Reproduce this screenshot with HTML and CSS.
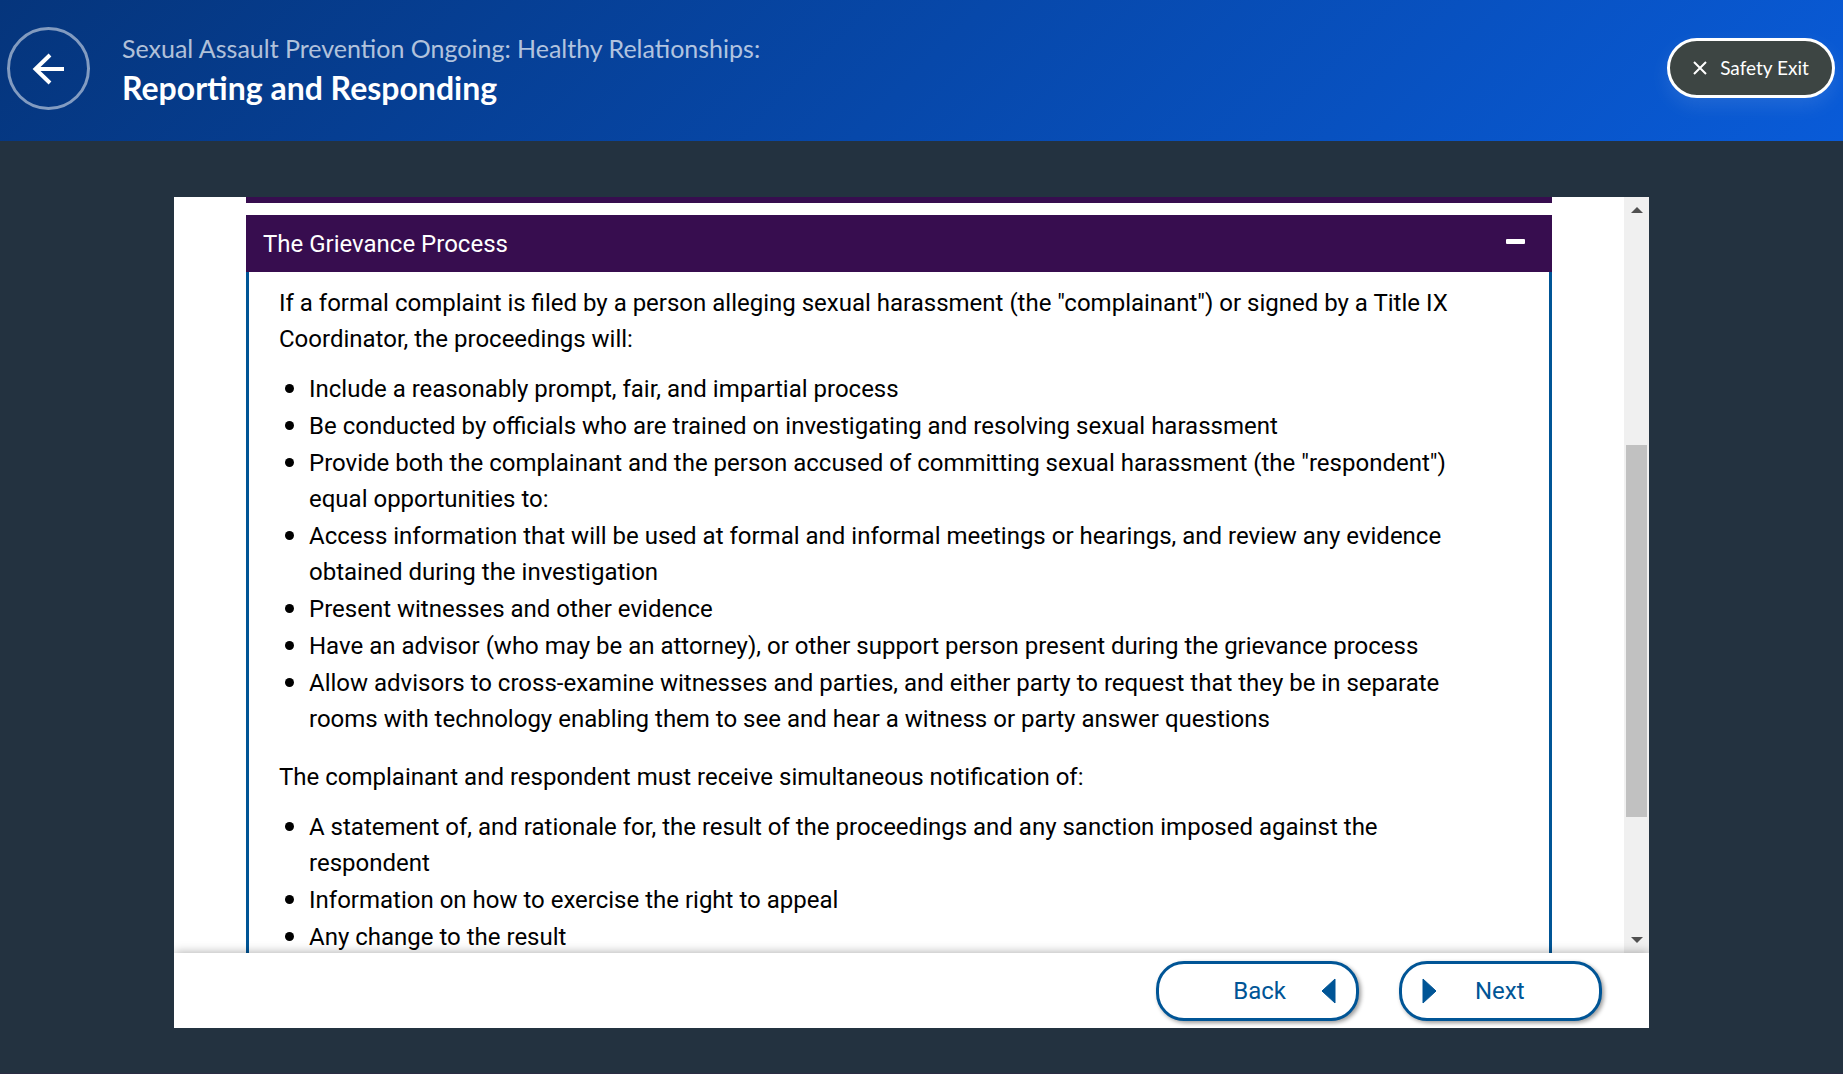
FILE: index.html
```html
<!DOCTYPE html>
<html lang="en">
<head>
<meta charset="utf-8">
<title>Reporting and Responding</title>
<link rel="stylesheet" href="styles.css">
</head>
<body>
<header class="topbar">
  <button class="back-circle" type="button" aria-label="Back to course">
    <svg class="arrow" viewBox="0 0 34 32" aria-hidden="true"><path d="M32 16H3M18 2L3.500 16L18 30"/></svg>
  </button>
  <div class="titles">
    <p class="course">Sexual Assault Prevention Ongoing: Healthy Relationships:</p>
    <h1 class="module">Reporting and Responding</h1>
  </div>
  <button class="safety-exit" type="button">
    <svg class="cross" viewBox="0 0 14 14" aria-hidden="true"><path d="M1 1L13 13M13 1L1 13"/></svg>
    Safety Exit
  </button>
</header>
<main class="main">
  <div class="stage">
    <div class="viewport">
      <div class="content">
        <div class="previous-panel"></div>
        <section class="panel">
          <h2 class="panel-title">
            <button class="panel-toggle" type="button" aria-expanded="true">The Grievance Process<span class="minus"></span></button>
          </h2>
          <div class="panel-body">
            <p class="text">If a formal complaint is filed by a person alleging sexual harassment (the "complainant") or signed by a Title IX Coordinator, the proceedings will:</p>
            <ul class="list">
              <li>Include a reasonably prompt, fair, and impartial process</li>
              <li>Be conducted by officials who are trained on investigating and resolving sexual harassment</li>
              <li>Provide both the complainant and the person accused of committing sexual harassment (the "respondent") equal opportunities to:</li>
              <li>Access information that will be used at formal and informal meetings or hearings, and review any evidence obtained during the investigation</li>
              <li>Present witnesses and other evidence</li>
              <li>Have an advisor (who may be an attorney), or other support person present during the grievance process</li>
              <li>Allow advisors to cross-examine witnesses and parties, and either party to request that they be in separate rooms with technology enabling them to see and hear a witness or party answer questions</li>
            </ul>
            <p class="text">The complainant and respondent must receive simultaneous notification of:</p>
            <ul class="list">
              <li>A statement of, and rationale for, the result of the proceedings and any sanction imposed against the respondent</li>
              <li>Information on how to exercise the right to appeal</li>
              <li>Any change to the result</li>
            </ul>
          </div>
        </section>
      </div>
      <div class="scrollbar" aria-hidden="true">
        <svg class="scroll-arrow" viewBox="0 0 12 6"><path d="M0 6L6 0L12 6Z"/></svg>
        <div class="track"><div class="thumb"></div></div>
        <svg class="scroll-arrow" viewBox="0 0 12 6"><path d="M0 0L6 6L12 0Z"/></svg>
      </div>
    </div>
    <nav class="controls">
      <button class="nav-button back" type="button">Back<svg class="triangle" viewBox="0 0 15 26" aria-hidden="true"><path d="M14 1V25L1 13Z"/></svg></button>
      <button class="nav-button next" type="button"><svg class="triangle" viewBox="0 0 15 26" aria-hidden="true"><path d="M1 1V25L14 13Z"/></svg>Next</button>
    </nav>
  </div>
</main>
</body>
</html>
```
FILE: styles.css
```css
* { box-sizing: border-box; }

body {
  margin: 0;
  height: 100vh;
  display: flex;
  flex-direction: column;
  background: #233240;
  font-family: Roboto, "Liberation Sans", sans-serif;
}

button { font: inherit; cursor: pointer; }

.topbar {
  display: flex;
  align-items: center;
  gap: 32px;
  height: 141px;
  padding: 0 8px 6px 7px;
  background: linear-gradient(135deg, #05357c, #095bd8);
  color: #fff;
  font-family: Lato, "Open Sans", sans-serif;
}

.back-circle {
  display: flex;
  align-items: center;
  justify-content: center;
  width: 83px;
  height: 83px;
  margin-top: 2px;
  padding: 0;
  border: 3px solid rgba(255, 255, 255, 0.5);
  border-radius: 50%;
  background: none;
}

.arrow { width: 34px; height: 32px; }
.arrow path { fill: none; stroke: #fff; stroke-width: 4; }

.titles { flex: 1; }

.course {
  margin: 0;
  font-size: 25px;
  line-height: 40px;
  color: rgba(255, 255, 255, 0.7);
}

.module {
  margin: 0;
  font-size: 32px;
  line-height: 40px;
  font-weight: 700;
}

.safety-exit {
  display: flex;
  align-items: center;
  justify-content: center;
  gap: 13px;
  width: 168px;
  height: 60px;
  padding: 0;
  border: 3px solid #fff;
  border-radius: 30px;
  background: #3d4543;
  box-shadow: 0 8px 20px rgba(255, 255, 255, 0.1);
  color: #fff;
  font-size: 19px;
}

.cross { width: 14px; height: 14px; }
.cross path { stroke: #fff; stroke-width: 2; }

.main {
  flex: 1;
  min-height: 0;
  display: flex;
  padding: 56px 194px 46px 174px;
  box-shadow: inset 0 -1px #2a2b42;
}

.stage {
  flex: 1;
  display: flex;
  flex-direction: column;
  background: #fff;
}

.viewport {
  flex: 1;
  min-height: 0;
  display: flex;
}

.content {
  flex: 1;
  min-height: 0;
  padding: 0 72px;
  overflow: hidden;
}

.previous-panel {
  height: 6px;
  margin-bottom: 12px;
  background: #370d4f;
}

.panel-title { margin: 0; }

.panel-toggle {
  display: flex;
  align-items: center;
  justify-content: space-between;
  width: 100%;
  height: 57px;
  padding: 0 27px 0 17px;
  border: 0;
  background: #370d4f;
  color: #fff;
  font-size: 24px;
  font-weight: 400;
}

.minus {
  width: 19px;
  height: 5px;
  margin-bottom: 5px;
  border-radius: 1px;
  background: #fff;
}

.panel-body {
  padding: 13px 50px 40px 30px;
  border: 3px solid #005596;
  border-top: 0;
  color: #000;
  font-size: 24px;
  line-height: 36px;
}

.text { margin: 0; }

.list {
  display: flex;
  flex-direction: column;
  gap: 1px;
  margin: 14px 0 22px;
  padding-left: 6px;
  list-style: none;
}

.list li { display: flex; }

.list li::before {
  content: "";
  flex: none;
  width: 9px;
  height: 9px;
  margin: 13px 15px 0 0;
  border-radius: 50%;
  background: #000;
}

.scrollbar {
  display: flex;
  flex-direction: column;
  align-items: center;
  width: 25px;
  padding: 10px 2px;
  background: #f0f0f0;
}

.scroll-arrow { width: 12px; height: 6px; fill: #505050; }

.track { flex: 1; width: 100%; padding-top: 232px; }

.thumb { height: 372px; background: #c1c1c1; }

.controls {
  position: relative;
  display: flex;
  justify-content: flex-end;
  gap: 40px;
  padding: 8px 47px 7px;
  background: #fff;
  box-shadow: 0 0 10px rgba(0, 0, 0, 0.35);
  clip-path: inset(-12px 0 0 0);
}

.nav-button {
  display: flex;
  align-items: center;
  width: 203px;
  height: 60px;
  padding: 0 20px;
  border: 3px solid #005596;
  border-radius: 28px;
  background: #fff;
  box-shadow: 2px 2px 4px rgba(0, 0, 0, 0.4);
  color: #005596;
  font-size: 24px;
}

.back { justify-content: flex-end; gap: 35px; }
.next { gap: 38px; }

.triangle {
  width: 15px;
  height: 26px;
  fill: #005596;
  stroke: #005596;
  stroke-width: 1;
  stroke-linejoin: round;
}
```
